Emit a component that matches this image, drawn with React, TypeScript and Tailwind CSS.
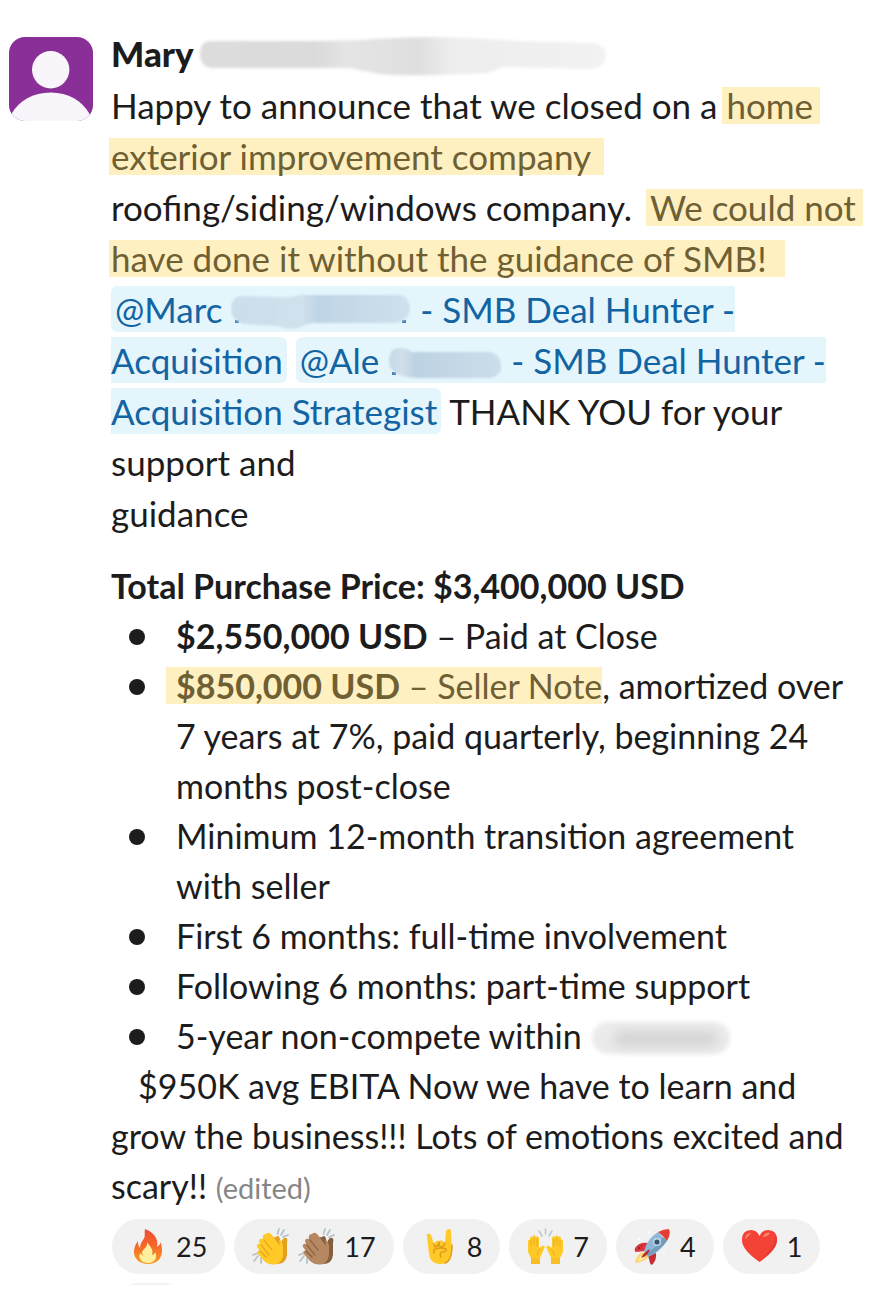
import type { ReactNode } from "react";

function Highlight({ children, className = "" }: { children: ReactNode; className?: string }) {
  return (
    <mark className={`inline-block bg-[#fff0c2] leading-[37px] text-[#6f6034] ${className}`}>{children}</mark>
  );
}

function Mention({ children }: { children: ReactNode }) {
  return (
    <a href="#" className="rounded-[6px] bg-[#e5f5fc] px-[4px] py-[2px] text-[#1264a3]">
      {children}
    </a>
  );
}

function Avatar() {
  return (
    <svg viewBox="0 0 84 84" className="mt-[9px] size-[84px] shrink-0 rounded-[16px]" role="img" aria-label="Mary">
      <rect width="84" height="84" fill="#8a2f98" />
      <circle cx="41.7" cy="32.7" r="18.7" fill="#f8f6fa" />
      <path d="M3 76C10 64 24 55.500 41.700 55.500S73 64 80 76L84 84H0Z" fill="#f8f6fa" />
    </svg>
  );
}

function NameSmudge() {
  return (
    <svg viewBox="0 0 412 44" className="h-[44px] w-[412px] min-w-0 shrink" aria-hidden="true">
      <defs>
        <linearGradient id="nameFade">
          <stop offset="0" stopColor="#dcdcdc" />
          <stop offset=".28" stopColor="#dadada" />
          <stop offset=".36" stopColor="#e4e4e4" />
          <stop offset=".54" stopColor="#dfdfdf" />
          <stop offset=".62" stopColor="#ededed" />
          <stop offset="1" stopColor="#f2f2f2" />
        </linearGradient>
        <filter id="nameBlur" x="-5%" y="-20%" width="110%" height="140%">
          <feGaussianBlur stdDeviation="1.6" />
        </filter>
      </defs>
      <path
        d="M12 5Q2 6 2 18T13 32L152 32Q172 36 182 38Q215 41 290 37L306 31L392 33Q408 31 408 20T395 7L320 5Q280 2 225 1Q190 2 164 4L128 5Z"
        fill="url(#nameFade)"
        filter="url(#nameBlur)"
      />
    </svg>
  );
}

function MarcSmudge() {
  return (
    <svg viewBox="3 0 180 38" className="inline-block h-[38px] w-[180px] align-[-8px]" aria-hidden="true">
      <defs>
        <linearGradient id="marcFade">
          <stop offset="0" stopColor="#cbdeeb" />
          <stop offset=".4" stopColor="#d1e1ed" />
          <stop offset=".48" stopColor="#bfd5e5" />
          <stop offset="1" stopColor="#cfe1ed" />
        </linearGradient>
        <filter id="marcBlur">
          <feGaussianBlur stdDeviation="1" />
        </filter>
      </defs>
      <path d="M7 27h4v3H7zM174 27h4v3h-4z" fill="#3f82b5" />
      <path
        d="M12 3Q3 5 3 16T16 31L50 33Q65 39 77 32L84 30L168 30Q181 28 182 15Q180 1 169 2L72 2Q62 5 50 4Z"
        fill="url(#marcFade)"
        filter="url(#marcBlur)"
      />
    </svg>
  );
}

function AleSmudge() {
  return (
    <svg viewBox="0 0 114 34" className="inline-block h-[34px] w-[114px] align-[-7px]" aria-hidden="true">
      <defs>
        <linearGradient id="aleFade">
          <stop offset="0" stopColor="#c6d9e7" />
          <stop offset=".12" stopColor="#cfdfeb" />
          <stop offset=".24" stopColor="#bdd2e2" />
          <stop offset="1" stopColor="#cbdeea" />
        </linearGradient>
        <filter id="aleBlur">
          <feGaussianBlur stdDeviation="1" />
        </filter>
      </defs>
      <path d="M4 25h4v3H4z" fill="#3f82b5" />
      <path
        d="M1 14Q1 1 12 1Q19 1 24 5L100 5Q112 6 113 18T101 31L29 31Q1 30 1 14Z"
        fill="url(#aleFade)"
        filter="url(#aleBlur)"
      />
    </svg>
  );
}

function PlaceSmudge() {
  return (
    <svg viewBox="0 0 142 38" className="inline-block h-[38px] w-[142px] align-[-8px]" aria-hidden="true">
      <defs>
        <filter id="placeBlur" x="-10%" y="-20%" width="120%" height="140%">
          <feGaussianBlur stdDeviation="2" />
        </filter>
        <filter id="placeCore" x="-50%" y="-150%" width="200%" height="400%">
          <feGaussianBlur stdDeviation="6" />
        </filter>
      </defs>
      <rect x="2" y="3" width="138" height="32" rx="16" fill="#ebebeb" filter="url(#placeBlur)" />
      <rect x="24" y="13" width="104" height="14" rx="7" fill="#d2d2d2" filter="url(#placeCore)" />
    </svg>
  );
}

const emoji = "size-[37px] shrink-0";

function Fire() {
  return (
    <svg viewBox="0 0 37 37" className={emoji} aria-hidden="true">
      <defs>
        <linearGradient id="flame" x1="0" y1="0" x2="0" y2="1">
          <stop offset="0" stopColor="#ee4b35" />
          <stop offset=".45" stopColor="#f4652b" />
          <stop offset="1" stopColor="#fb9c1d" />
        </linearGradient>
      </defs>
      <path
        d="M15 1C14 6 16 8 13 12C11 15 10 17 10 20C8 18 8 15 8 13C5 17 4 20 4 24C4 31 10 36 18 36C27 36 32 30 32 23C32 19 31 17 31 14C30 17 28 18 27 19C29 10 23 4 15 1Z"
        fill="url(#flame)"
      />
      <path
        d="M17 14C18 19 14 20 12 24C12 26 13 27 13 28L10 25C8 31 12 35 18 35C25 35 28 29 25 24C25 26 23 27 22 27C24 21 20 19 17 14Z"
        fill="#fff0a0"
      />
    </svg>
  );
}

function Clap({ skin, shade }: { skin: string; shade: string }) {
  return (
    <svg viewBox="0 0 37 37" className={emoji} aria-hidden="true">
      <path
        d="M27 1L25.500 6M32 2L29 7M36 7L31 9M1 27L6 25M2 33L6 28M9 35L9 30"
        stroke="#b3c1ca"
        strokeWidth="1.700"
        strokeLinecap="round"
        fill="none"
      />
      <path
        d="M24 9Q27 6 28 11L29 15Q31 9 34 10Q36 10 35 15L35 27Q34 36 25 36L17 31L13 11Z"
        fill={shade}
      />
      <path
        d="M14 6Q17 3 20 7L28 18L27 12Q30 12 31 18L31 26Q31 33 25 36Q18 38 12 33L6 26Q4 22 8 23L5 19Q4 15 8 16L7 13Q7 10 11 11Q10 6 14 6Z"
        fill={skin}
      />
      <path
        d="M12 12L20 22M9 17L17 27M8 23L14 29"
        stroke={shade}
        strokeWidth="1.200"
        strokeLinecap="round"
        fill="none"
      />
    </svg>
  );
}

function Horns() {
  return (
    <svg viewBox="0 0 37 37" className={emoji} aria-hidden="true">
      <path
        d="M6 8Q5 6 7 6Q9 5 10 7L13 16Q15 12 18 13Q21 11 24 15L25 3Q26 1 28 1Q30 1 30 4L31 22Q31 37 18 36Q9 35 8 26Z"
        fill="#ffc928"
      />
      <path
        d="M13 16L14 19Q17 19 18 14Q18 19 20 19Q23 19 24 15M15 21Q19 19 25 21Q26 24 21 24Q18 25 20 29M14 21Q12 21 13 25M31 17Q31 33 24 35"
        stroke="#e29a1b"
        strokeWidth="1.500"
        strokeLinecap="round"
        fill="none"
      />
    </svg>
  );
}

function RaisedHands() {
  const hand =
    "M4 36L4 30L1 24L1 13Q1 11 3 12L3 10Q4 7 6 9L6 8Q8 6 9 9Q11 7 12 10L12 20L15 18Q19 17 17 21L13 30L13 36Z";
  const fingers = "M4 12L4 18M7 10L7 17M10 11L10 18M13 21Q10 23 10 27";
  const oneHand = (
    <>
      <path d={hand} fill="#ffc928" />
      <path d={fingers} stroke="#e9a91f" strokeWidth="1" fill="none" strokeLinecap="round" />
      <path d="M4 30H13V36H4Z" fill="#f9bd25" />
    </>
  );
  return (
    <svg viewBox="0 0 37 37" className={emoji} aria-hidden="true">
      {oneHand}
      <g transform="translate(37 0) scale(-1 1)">{oneHand}</g>
      <path d="M18.500 1V6M12 3L15 8M25 3L22 8" stroke="#b9c6cf" strokeWidth="1.500" strokeLinecap="round" />
    </svg>
  );
}

function Rocket() {
  return (
    <svg viewBox="0 0 37 37" className={emoji} aria-hidden="true">
      <path d="M10 24Q3 25 1 35Q10 34 15 29Z" fill="#ffd36b" />
      <path d="M9 27Q5 29 4 33Q9 32 11 29Z" fill="#fff3b0" />
      <path d="M14 15Q5 14 1 20Q0 23 2 24L11 23Z" fill="#d9353b" />
      <path d="M21 23Q24 30 19 36Q17 38 16 35L14 27Z" fill="#c62c36" />
      <path d="M10 23Q13 11 24 4L33 13Q26 24 14 29Z" fill="#8fb8d8" />
      <path d="M14 28Q24 24 33 13L29 9Q23 20 12 25Z" fill="#6f9cbf" />
      <path d="M24 4Q30 1 35 1Q37 6 33 13Q30 8 24 4Z" fill="#e43c32" />
      <path d="M7 30Q10 24 16 21Q14 28 7 30Z" fill="#b9262f" />
      <circle cx="23" cy="14" r="4" fill="#c8dae5" />
      <circle cx="23" cy="14" r="2.600" fill="#36566d" />
      <path d="M4 20H6M7 18H8" stroke="#7e1f2a" strokeWidth="1.500" />
      <circle cx="15" cy="4" r="1" fill="#fff" />
      <circle cx="5" cy="11" r="1" fill="#fff" />
      <circle cx="30" cy="25" r="1" fill="#fff" />
    </svg>
  );
}

function Heart() {
  return (
    <svg viewBox="0 0 37 37" className={emoji} aria-hidden="true">
      <path
        d="M18.500 34Q1 22 1 12Q1 2 10 2Q16 2 18.500 8Q21 2 27 2Q36 2 36 12Q36 22 18.500 34Z"
        fill="#f44336"
      />
      <path d="M4 11Q5 5 10 5Q7 9 4 11ZM22 9Q24 4 29 5Q26 9 22 9Z" fill="#ff8a70" />
      <path d="M33 6Q35 10 33 15Q29 24 19 32Q36 22 36 12Q36 8 33 6Z" fill="#e23c30" />
    </svg>
  );
}

function Reaction({ label, count, children }: { label: string; count: number; children: ReactNode }) {
  return (
    <button
      type="button"
      aria-label={`${label}, ${count}`}
      className="flex h-[55px] items-center gap-[9px] rounded-full bg-[#f1f1f1] px-[18px] text-[27px] leading-[37px]"
    >
      {children}
      <span>{count}</span>
    </button>
  );
}

export default function App() {
  return (
    <main className="min-h-screen bg-white font-['Lato',sans-serif] text-[35px] leading-[51px] text-[#1d1c1d]">
      <article className="flex gap-[18px] px-[9px] pt-[28px]">
        <Avatar />
        <div className="min-w-0 flex-1">
          <header className="flex h-[52px] items-start gap-[4px]">
            <h1 className="font-black">Mary</h1>
            <div className="min-w-0 self-end">
              <NameSmudge />
            </div>
          </header>

          <p>
            Happy to announce that we closed on a{" "}
            <Highlight className="-ml-[4px] pr-[7px] pl-[4px]">home</Highlight>
            <br />
            <Highlight className="-ml-[2px] pr-[13px] pl-[2px]">exterior improvement company</Highlight>
            <br />
            roofing/siding/windows company.&nbsp;{" "}
            <Highlight className="-mr-[9px] -ml-[4px] pr-[7px] pl-[4px]">We could not</Highlight>
            <br />
            <Highlight className="-ml-[2px] pr-[18px] pl-[2px]">have done it without the guidance of SMB!</Highlight>
            <br />
            <Mention>
              @Marc <MarcSmudge />
              {" - SMB Deal Hunter -"}
              <br />
              Acquisition
            </Mention>{" "}
            <Mention>
              @Ale <AleSmudge />
              {" - SMB Deal Hunter -"}
              <br />
              Acquisition Strategist
            </Mention>{" "}
            THANK YOU for your
            <br />
            support and
            <br />
            guidance
          </p>

          <section className="mt-[22px] text-[34px] leading-[50px]">
            <h2 className="font-bold">Total Purchase Price: $3,400,000 USD</h2>
            <ul className="list-none">
              {[
                <>
                  <strong>$2,550,000 USD</strong> – Paid at Close
                </>,
                <>
                  <Highlight className="-ml-[10px] pl-[10px]">
                    <strong>$850,000 USD</strong> – Seller Note
                  </Highlight>
                  , amortized over 7 years at 7%, paid quarterly, beginning 24 months post-close
                </>,
                <>Minimum 12-month transition agreement with seller</>,
                <>First 6 months: full-time involvement</>,
                <>Following 6 months: part-time support</>,
                <>
                  5-year non-compete within <PlaceSmudge />
                </>,
              ].map((item, i) => (
                <li key={i} className="flex gap-[31px] pl-[18px]">
                  <span className="mt-[18px] size-[16px] shrink-0 rounded-full bg-[#1d1c1d]" />
                  <div className="min-w-0 flex-1">{item}</div>
                </li>
              ))}
            </ul>
            <p className="indent-[27px]">
              $950K avg EBITA Now we have to learn and grow the business!!! Lots of emotions excited and scary!!{" "}
              <span className="text-[29px] text-[#868686]">(edited)</span>
            </p>
          </section>

          <footer className="mt-[6px] flex flex-wrap gap-[9px] pl-px">
            <Reaction label="Fire" count={25}>
              <Fire />
            </Reaction>
            <Reaction label="Clap" count={17}>
              <Clap skin="#ffc928" shade="#e5a01c" />
              <Clap skin="#b68862" shade="#855d3f" />
            </Reaction>
            <Reaction label="Horns" count={8}>
              <Horns />
            </Reaction>
            <Reaction label="Raised hands" count={7}>
              <RaisedHands />
            </Reaction>
            <Reaction label="Rocket" count={4}>
              <Rocket />
            </Reaction>
            <Reaction label="Heart" count={1}>
              <Heart />
            </Reaction>
          </footer>
          <div className="mt-[9px] h-[2px] overflow-hidden pl-px">
            <div className="h-[55px] w-[78px] rounded-full bg-[#f1f1f1]" />
          </div>
        </div>
      </article>
    </main>
  );
}
